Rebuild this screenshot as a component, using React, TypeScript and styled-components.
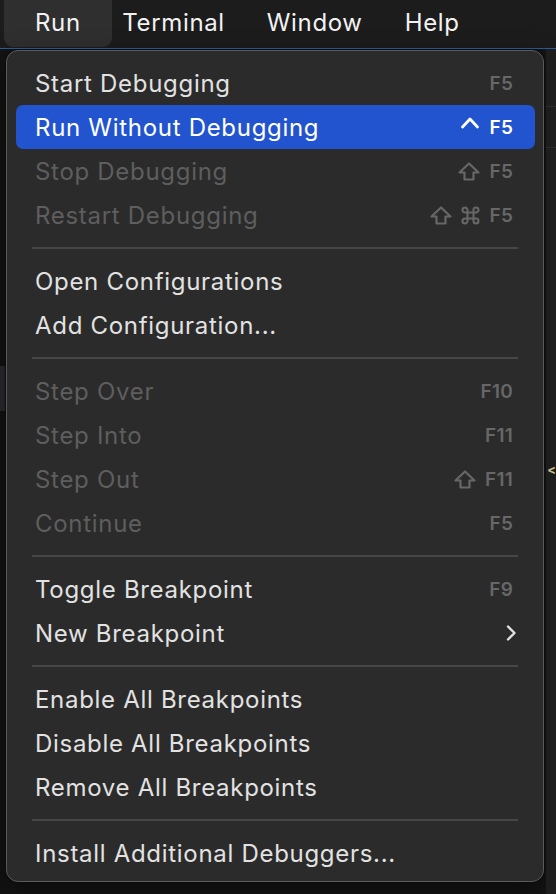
import React from "react";
import styled, { createGlobalStyle } from "styled-components";

const GlobalStyle = createGlobalStyle`
  html, body {
    margin: 0;
    padding: 0;
    background: #161616;
    width: 556px;
    height: 894px;
    overflow: hidden;
  }
  body {
    font-family: Inter, "Noto Sans", "Liberation Sans", sans-serif;
    -webkit-font-smoothing: antialiased;
  }
`;

type Item =
  | { kind: "sep" }
  | {
      kind: "item";
      label: string;
      keys?: string[];
      disabled?: boolean;
      active?: boolean;
      submenu?: boolean;
    };

const items: Item[] = [
  { kind: "item", label: "Start Debugging", keys: ["F5"] },
  { kind: "item", label: "Run Without Debugging", keys: ["ctrl", "F5"], active: true },
  { kind: "item", label: "Stop Debugging", keys: ["shift", "F5"], disabled: true },
  { kind: "item", label: "Restart Debugging", keys: ["shift", "cmd", "F5"], disabled: true },
  { kind: "sep" },
  { kind: "item", label: "Open Configurations" },
  { kind: "item", label: "Add Configuration..." },
  { kind: "sep" },
  { kind: "item", label: "Step Over", keys: ["F10"], disabled: true },
  { kind: "item", label: "Step Into", keys: ["F11"], disabled: true },
  { kind: "item", label: "Step Out", keys: ["shift", "F11"], disabled: true },
  { kind: "item", label: "Continue", keys: ["F5"], disabled: true },
  { kind: "sep" },
  { kind: "item", label: "Toggle Breakpoint", keys: ["F9"] },
  { kind: "item", label: "New Breakpoint", submenu: true },
  { kind: "sep" },
  { kind: "item", label: "Enable All Breakpoints" },
  { kind: "item", label: "Disable All Breakpoints" },
  { kind: "item", label: "Remove All Breakpoints" },
  { kind: "sep" },
  { kind: "item", label: "Install Additional Debuggers..." },
];

const Page = styled.div`
  width: 556px;
  height: 894px;
  display: flex;
  flex-direction: column;
  background: #161616;
`;

const MenuBar = styled.div`
  height: 48px;
  display: flex;
  align-items: stretch;
  padding-left: 4px;
  background: #1c1c1c;
  border-bottom: 1px solid #2f5c9e;
`;

const BarItem = styled.div<{ $open?: boolean }>`
  display: flex;
  align-items: center;
  padding: 0 ${(p) => (p.$open ? "31px" : "21px")};
  padding-bottom: 2px;
  margin-right: ${(p) => (p.$open ? "-10.5px" : "0")};
  margin-bottom: 1px;
  font-size: 24px;
  letter-spacing: 0.65px;
  color: #f2f2f2;
  border-radius: 0 0 9px 9px;
  background: ${(p) => (p.$open ? "#2f2f2f" : "transparent")};
`;

const Workspace = styled.div`
  flex: 1;
  display: flex;
  align-items: flex-start;
  background: #141414;
`;

const LeftGutter = styled.div`
  width: 6px;
  align-self: stretch;
  display: flex;
  flex-direction: column;
  background: #131313;
`;

const GutterBlock = styled.div`
  height: 45px;
  margin-top: 317px;
  background: #2b2b31;
`;

const EditorEdge = styled.div`
  flex: 1;
  align-self: stretch;
  display: flex;
  flex-direction: column;
  background: #1d1d1d;
  margin-left: 2px;
`;

const EdgeLine = styled.div<{ $top: number }>`
  margin-top: ${(p) => p.$top}px;
  height: 1px;
  background: #2c2c2c;
`;

const EdgeMark = styled.div`
  margin-top: 316px;
  margin-left: 1px;
  color: #c8c08a;
  font-size: 13px;
  font-weight: 700;
  line-height: 10px;
`;

const Panel = styled.div`
  width: 540px;
  margin-top: 1px;
  box-sizing: border-box;
  padding: 10px 8px 6px 9px;
  background: #2b2b2b;
  border: 1px solid #5a5a5a;
  border-radius: 12px;
  box-shadow: 0 0 0 1px #0c0c0c, 0 8px 24px rgba(0, 0, 0, 0.5);
  display: flex;
  flex-direction: column;
`;

const Row = styled.div<{ $active?: boolean; $disabled?: boolean }>`
  height: 44px;
  display: flex;
  align-items: center;
  justify-content: space-between;
  padding: 0 22px 0 19px;
  border-radius: 7px;
  font-size: 24px;
  letter-spacing: 0.7px;
  color: ${(p) => (p.$active ? "#ffffff" : p.$disabled ? "#5e5e5e" : "#e2e2e2")};
  background: ${(p) => (p.$active ? "#2254cf" : "transparent")};
`;

const Keys = styled.div<{ $active?: boolean }>`
  display: flex;
  align-items: center;
  gap: 9px;
  font-size: 19px;
  font-weight: 600;
  letter-spacing: 0.3px;
  color: ${(p) => (p.$active ? "#ffffff" : "#676767")};
`;

const KeyText = styled.span`
  min-width: 23px;
  text-align: left;
`;

const Separator = styled.div`
  height: 22px;
  display: flex;
  align-items: center;
  padding: 0 17px 0 16px;
  &::after {
    content: "";
    flex: 1;
    height: 2px;
    background: #464646;
  }
`;

const Glyph = ({ name }: { name: string }) => {
  if (name === "ctrl")
    return (
      <svg width="20" height="14" viewBox="0 0 20 14" style={{ marginTop: -8 }}>
        <path d="M2.5 11 L10 3 L17.5 11" fill="none" stroke="currentColor" strokeWidth="2.8" strokeLinecap="round" strokeLinejoin="round" />
      </svg>
    );
  if (name === "shift")
    return (
      <svg width="22" height="19" viewBox="0 0 22 19">
        <path
          d="M11 1.5 L20.5 10.5 L15.5 10.5 L15.5 17.5 L6.5 17.5 L6.5 10.5 L1.5 10.5 Z"
          fill="none"
          stroke="currentColor"
          strokeWidth="2.2"
          strokeLinejoin="round"
        />
      </svg>
    );
  if (name === "cmd")
    return (
      <svg width="19" height="19" viewBox="0 0 19 19">
        <path
          d="M6.5 6.5 L6.5 4 A2.5 2.5 0 1 0 4 6.5 L15 6.5 A2.5 2.5 0 1 0 12.5 4 L12.5 15 A2.5 2.5 0 1 0 15 12.5 L4 12.5 A2.5 2.5 0 1 0 6.5 15 Z"
          fill="none"
          stroke="currentColor"
          strokeWidth="2.1"
          strokeLinejoin="round"
        />
      </svg>
    );
  return <KeyText>{name}</KeyText>;
};

const Chevron = () => (
  <svg width="12" height="18" viewBox="0 0 12 18" style={{ marginRight: -4 }}>
    <path d="M3 2.5 L9.5 9 L3 15.5" fill="none" stroke="#e2e2e2" strokeWidth="2.4" strokeLinecap="round" strokeLinejoin="round" />
  </svg>
);

export default function App() {
  return (
    <>
      <GlobalStyle />
      <Page>
        <MenuBar>
          <BarItem $open>Run</BarItem>
          <BarItem>Terminal</BarItem>
          <BarItem>Window</BarItem>
          <BarItem>Help</BarItem>
        </MenuBar>
        <Workspace>
          <LeftGutter>
            <GutterBlock />
          </LeftGutter>
          <Panel>
            {items.map((it, i) =>
              it.kind === "sep" ? (
                <Separator key={i} />
              ) : (
                <Row key={i} $active={it.active} $disabled={it.disabled}>
                  <span>{it.label}</span>
                  {it.keys && (
                    <Keys $active={it.active}>
                      {it.keys.map((k) => (
                        <Glyph key={k} name={k} />
                      ))}
                    </Keys>
                  )}
                  {it.submenu && <Chevron />}
                </Row>
              )
            )}
          </Panel>
          <EditorEdge>
            <EdgeLine $top={57} />
            <EdgeLine $top={40} />
            <EdgeMark>&lt;</EdgeMark>
          </EditorEdge>
        </Workspace>
      </Page>
    </>
  );
}
